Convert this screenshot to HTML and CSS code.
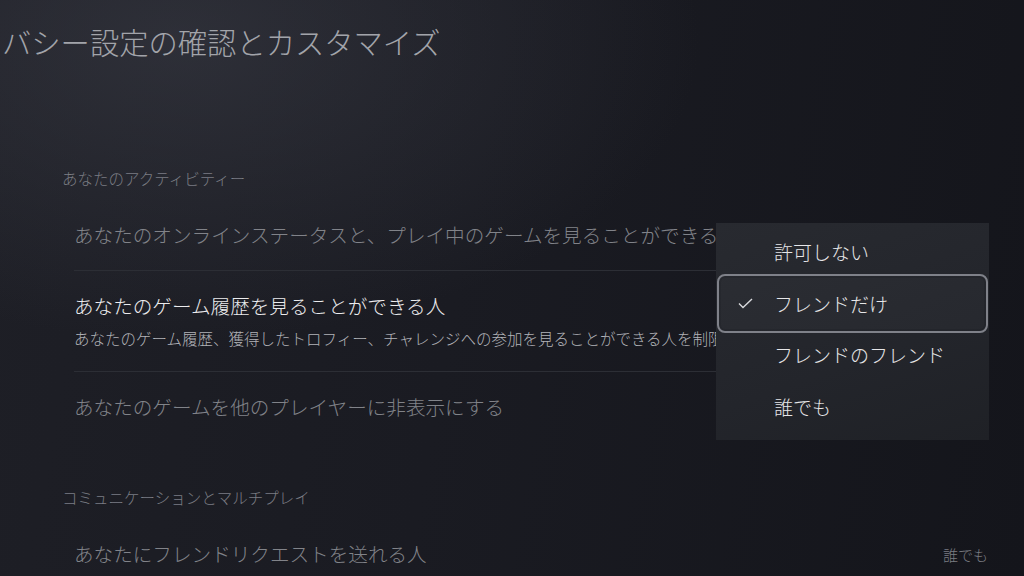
FILE: index.html
```html
<!DOCTYPE html>
<html lang="ja">
<head>
    <meta charset="UTF-8">
    <meta name="viewport" content="width=device-width, initial-scale=1.0">
    <title>プライバシー設定</title>
    <link rel="stylesheet" href="styles.css">
</head>
<body>
    <h1 class="title">バシー設定の確認とカスタマイズ</h1>

    <div class="content">
        <div class="section">
            <div class="section-label">あなたのアクティビティー</div>
            <div class="row row-line dim">
                <span class="row-title">あなたのオンラインステータスと、プレイ中のゲームを見ることができる人</span>
            </div>
            <div class="row row-line row-tall">
                <span class="row-title">あなたのゲーム履歴を見ることができる人</span>
                <span class="row-desc">あなたのゲーム履歴、獲得したトロフィー、チャレンジへの参加を見ることができる人を制限します。</span>
            </div>
            <div class="row dim">
                <span class="row-title">あなたのゲームを他のプレイヤーに非表示にする</span>
            </div>
        </div>

        <div class="section section-2">
            <div class="section-label">コミュニケーションとマルチプレイ</div>
            <div class="row row-value dim">
                <span class="row-title">あなたにフレンドリクエストを送れる人</span>
                <span class="value">誰でも</span>
            </div>
        </div>
    </div>

    <div class="dropdown">
        <div class="option"><span class="check"></span>許可しない</div>
        <div class="option selected">
            <span class="check">
                <svg width="15" height="11" viewBox="0 0 15 11"><polyline points="1,5.5 5,9.5 14,1" fill="none" stroke="#d8d9dc" stroke-width="1.4"/></svg>
            </span>フレンドだけ
        </div>
        <div class="option"><span class="check"></span>フレンドのフレンド</div>
        <div class="option"><span class="check"></span>誰でも</div>
    </div>
</body>
</html>
```

FILE: styles.css
```css
html, body {
    margin: 0;
    padding: 0;
}
body {
    width: 1024px;
    height: 576px;
    overflow: hidden;
    position: relative;
    font-family: "Noto Sans CJK JP", "Noto Sans", sans-serif;
    font-weight: 300;
    background:
        radial-gradient(ellipse 520px 300px at 180px 40px, rgba(60, 62, 72, 0.55), rgba(60, 62, 72, 0) 100%),
        linear-gradient(100deg, #1e1f26 0%, #1a1b22 45%, #14151b 100%);
}
.title {
    margin: 0;
    padding: 23px 0 0 2px;
    font-size: 29.3px;
    line-height: 36px;
    font-weight: 300;
    color: #a2a4aa;
    white-space: nowrap;
}
.content {
    padding: 0 36px 0 62px;
}
.section {
    margin-top: 108px;
}
.section-2 {
    margin-top: 44px;
}
.section-label {
    font-size: 15.5px;
    line-height: 22px;
    color: #7b7d84;
    margin-bottom: 11px;
}
.row {
    margin-left: 12px;
    height: 70px;
    display: flex;
    flex-direction: column;
    justify-content: center;
    overflow: hidden;
    white-space: nowrap;
}
.row-line {
    border-bottom: 1px solid #2c2e35;
}
.row-tall {
    height: 100px;
}
.row-title {
    font-size: 19.6px;
    line-height: 24px;
    color: #ececee;
}
.row-desc {
    margin-top: 10px;
    font-size: 15.5px;
    line-height: 20px;
    color: #b2b3b8;
}
.dim .row-title {
    color: #818389;
}
.row-value {
    flex-direction: row;
    justify-content: space-between;
    align-items: center;
}
.value {
    font-size: 15px;
    color: #7a7c82;
}
.dropdown {
    position: absolute;
    left: 716px;
    top: 223px;
    width: 273px;
    height: 217px;
    box-sizing: border-box;
    padding: 3px 5px;
    background: linear-gradient(160deg, #282a30 0%, #23252b 60%, #1f2126 100%);
    display: flex;
    flex-direction: column;
}
.option {
    height: 51.5px;
    flex-shrink: 0;
    display: flex;
    align-items: center;
    font-size: 19px;
    color: #e6e6e8;
    border-radius: 4px;
}
.check {
    width: 53px;
    padding-left: 17px;
    box-sizing: border-box;
    display: flex;
    align-items: center;
}
.selected {
    outline: 2px solid #7f8189;
    outline-offset: 2px;
    background: rgba(255, 255, 255, 0.02);
}
```
